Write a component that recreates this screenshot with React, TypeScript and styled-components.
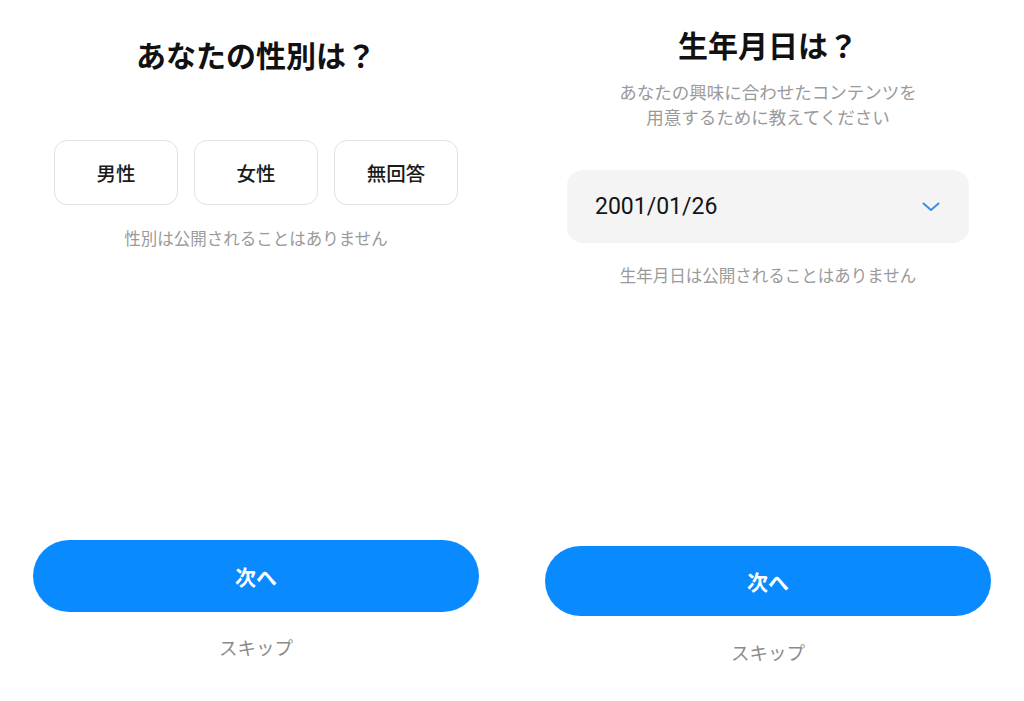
import React from "react";
import styled, { createGlobalStyle } from "styled-components";

const GlobalStyle = createGlobalStyle`
  html, body { margin: 0; padding: 0; background: #ffffff; }
  body { font-family: "Noto Sans CJK JP", "Noto Sans", sans-serif; }
  * { box-sizing: border-box; }
`;

const Screens = styled.div`
  display: flex;
  width: 1024px;
  height: 701px;
  background: #ffffff;
`;

const Panel = styled.section<{ $top: number; $bottom: number }>`
  width: 512px;
  height: 701px;
  display: flex;
  flex-direction: column;
  align-items: center;
  padding-top: ${(p) => p.$top}px;
  padding-bottom: ${(p) => p.$bottom}px;
`;

const Title = styled.h1`
  margin: 0;
  font-size: 30px;
  line-height: 40px;
  font-weight: 700;
  color: #111111;
`;

const Subtitle = styled.p`
  margin: 15px 0 0;
  font-size: 17.5px;
  line-height: 25px;
  color: #9a9a9a;
  text-align: center;
`;

const Options = styled.div`
  margin-top: 66px;
  display: flex;
  gap: 16px;
`;

const Option = styled.button`
  width: 124px;
  height: 65px;
  border: 1.5px solid #e2e2e2;
  border-radius: 13px;
  background: #ffffff;
  font-family: "Noto Sans CJK JP", sans-serif;
  font-size: 19.5px;
  font-weight: 500;
  color: #1a1a1a;
  padding: 0;
`;

const Note = styled.p<{ $mt: number }>`
  margin: ${(p) => p.$mt}px 0 0;
  font-size: 16.5px;
  line-height: 24px;
  color: #9a9a9a;
`;

const DateField = styled.div`
  margin-top: 41px;
  width: 402px;
  height: 73px;
  border-radius: 16px;
  background: #f4f4f4;
  display: flex;
  align-items: center;
  justify-content: space-between;
  padding: 0 29px 0 28px;
`;

const DateText = styled.span`
  font-family: Roboto, "Liberation Sans", sans-serif;
  font-size: 23px;
  color: #141414;
`;

const Footer = styled.div<{ $gap: number }>`
  margin-top: auto;
  display: flex;
  flex-direction: column;
  align-items: center;
  gap: ${(p) => p.$gap}px;
`;

const NextButton = styled.button<{ $h: number }>`
  width: 446px;
  height: ${(p) => p.$h}px;
  border: none;
  border-radius: 36px;
  background: #0a8aff;
  color: #ffffff;
  font-family: "Noto Sans CJK JP", sans-serif;
  font-size: 21px;
  font-weight: 700;
  padding: 0;
`;

const Skip = styled.span`
  font-size: 18.5px;
  line-height: 26px;
  color: #8a8a8a;
`;

const Chevron = () => (
  <svg width="18" height="10" viewBox="0 0 18 10" fill="none">
    <path d="M1.5 1.5 L9 8 L16.5 1.5" stroke="#3a8ee6" strokeWidth="2" strokeLinecap="round" strokeLinejoin="round" />
  </svg>
);

export default function App() {
  return (
    <>
      <GlobalStyle />
      <Screens>
        <Panel $top={34} $bottom={41}>
          <Title>あなたの性別は？</Title>
          <Options>
            <Option>男性</Option>
            <Option>女性</Option>
            <Option>無回答</Option>
          </Options>
          <Note $mt={21}>性別は公開されることはありません</Note>
          <Footer $gap={22}>
            <NextButton $h={72}>次へ</NextButton>
            <Skip>スキップ</Skip>
          </Footer>
        </Panel>
        <Panel $top={24} $bottom={36}>
          <Title>生年月日は？</Title>
          <Subtitle>
            あなたの興味に合わせたコンテンツを
            <br />
            用意するために教えてください
          </Subtitle>
          <DateField>
            <DateText>2001/01/26</DateText>
            <Chevron />
          </DateField>
          <Note $mt={20}>生年月日は公開されることはありません</Note>
          <Footer $gap={23}>
            <NextButton $h={70}>次へ</NextButton>
            <Skip>スキップ</Skip>
          </Footer>
        </Panel>
      </Screens>
    </>
  );
}
